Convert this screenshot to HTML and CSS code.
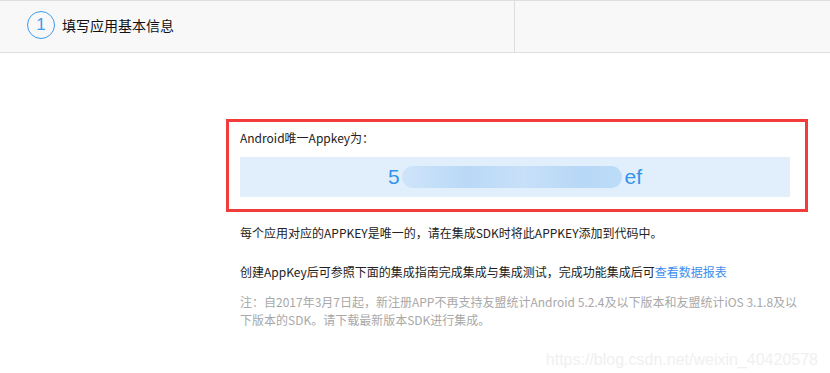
FILE: index.html
```html
<!DOCTYPE html>
<html lang="zh-CN">
<head>
  <meta charset="UTF-8">
  <title>创建应用</title>
  <link rel="stylesheet" href="styles.css">
</head>
<body>
  <div class="steps">
    <div class="step step-active">
      <span class="step-num">1</span>
      <span class="step-title">填写应用基本信息</span>
    </div>
    <div class="step"></div>
  </div>

  <main class="content">
    <div class="key-card">
      <p class="key-label">Android唯一Appkey为：</p>
      <div class="key-box">
        <span class="key-text">5<span class="key-mask"></span>ef</span>
      </div>
    </div>

    <div class="info">
      <p class="info-line">每个应用对应的APPKEY是唯一的，请在集成SDK时将此APPKEY添加到代码中。</p>
      <p class="info-line info-gap">创建AppKey后可参照下面的集成指南完成集成与集成测试，完成功能集成后可<a href="#" class="report-link">查看数据报表</a></p>
      <p class="info-note">注：自2017年3月7日起，新注册APP不再支持友盟统计Android 5.2.4及以下版本和友盟统计iOS 3.1.8及以下版本的SDK。请下载最新版本SDK进行集成。</p>
    </div>
  </main>

  <div class="watermark">https://blog.csdn.net/weixin_40420578</div>
</body>
</html>
```

FILE: styles.css
```css
body {
  margin: 0;
  font-family: "Noto Sans CJK SC", "Liberation Sans", sans-serif;
  color: #222;
  background-color: #fff;
}
.steps {
  display: flex;
  height: 51px;
  background-color: #f8f8f8;
  border-top: 1px solid #dedede;
  border-bottom: 1px solid #dedede;
}
.step {
  flex: 1;
  display: flex;
  align-items: center;
  padding-left: 27px;
}
.step-active {
  flex: 0 0 487px;
  border-right: 1px solid #dedede;
}
.step-num {
  width: 26px;
  height: 26px;
  border: 1px solid #3d9bf0;
  border-radius: 50%;
  display: flex;
  align-items: center;
  justify-content: center;
  color: #3d9bf0;
  font-family: "Liberation Sans", sans-serif;
  font-size: 17px;
  font-weight: 300;
  margin-top: -3px;
}
.step-title {
  margin-left: 7px;
  font-size: 14px;
  color: #111;
  margin-top: -3px;
}
.content {
  padding: 66px 0 0 226px;
  width: 582px;
}
.key-card {
  border: 3px solid #f23c3c;
  padding: 6px 15px 12px 11px;
}
.key-label {
  margin: 0;
  font-size: 12px;
  line-height: 20px;
  color: #222;
}
.key-box {
  margin-top: 9px;
  height: 40px;
  background-color: #e1effc;
  display: flex;
  align-items: center;
  justify-content: center;
}
.key-text {
  display: flex;
  align-items: center;
  font-family: "Liberation Sans", sans-serif;
  font-size: 21px;
  color: #3593ea;
}
.key-mask {
  display: inline-block;
  width: 220px;
  height: 22px;
  margin: 0 3px 0 2px;
  border-radius: 11px;
  background: linear-gradient(90deg, #cfe4f9, #b9d9f7 30%, #c8e0f8 55%, #b7d8f6 80%, #bcdcf8);
}
.info {
  padding-left: 14px;
  width: 560px;
}
.info-line {
  margin: 12px 0 0;
  font-size: 12px;
  line-height: 18px;
  color: #222;
}
.info-gap {
  margin-top: 21px;
}
.report-link {
  color: #3d8eec;
  text-decoration: none;
}
.info-note {
  margin: 12px 0 0;
  font-size: 12px;
  line-height: 18px;
  color: #a8a8a8;
}
.watermark {
  position: absolute;
  right: 12px;
  bottom: 4px;
  font-family: "Liberation Sans", sans-serif;
  font-size: 16px;
  color: #f0f0f0;
}
```
